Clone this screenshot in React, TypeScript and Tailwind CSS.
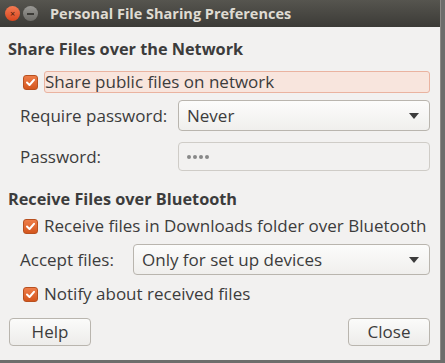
import { ReactNode } from 'react'

const font = { fontFamily: '"Open Sans", "DejaVu Sans", sans-serif' }

const Check = () => (
  <span className="flex h-[15px] w-[15px] shrink-0 items-center justify-center rounded-[3px] border border-[#b8501f] bg-gradient-to-b from-[#ee7d48] to-[#d4561c]">
    <svg width="11" height="11" viewBox="0 0 11 11">
      <path d="M2 5.5 L4.5 8 L9 2.8" fill="none" stroke="#fff" strokeWidth="2" strokeLinecap="round" strokeLinejoin="round" />
    </svg>
  </span>
)

const Arrow = () => (
  <svg width="10" height="6" viewBox="0 0 10 6" className="mr-[10px]">
    <path d="M0 0 H10 L5 6 Z" fill="#3c3c3c" />
  </svg>
)

const CheckRow = ({ children, highlight }: { children: ReactNode; highlight?: boolean }) => (
  <div className="flex h-[22px] items-center gap-[6px] whitespace-nowrap pl-[23px] pr-[10px]">
    <Check />
    <span
      className={
        highlight
          ? 'flex h-[22px] flex-1 items-center rounded-[3px] border border-[#eab3a0] bg-[#f8e5dd]'
          : ''
      }
    >
      {children}
    </span>
  </div>
)

const Combo = ({ value }: { value: string }) => (
  <div className="flex h-[31px] flex-1 items-center justify-between rounded-[4px] border border-[#b9b5ae] bg-gradient-to-b from-[#fcfcfb] to-[#f0efed] pl-[8px]">
    <span>{value}</span>
    <Arrow />
  </div>
)

export default function App() {
  return (
    <div className="h-[363px] w-[445px] bg-[#6d6d6b]" style={font}>
      <div className="flex h-[360px] w-[441px] flex-col border-r border-[#8c8a86] bg-[#f2f1f0] text-[17px] text-[#3c3c3c]">
        <div className="flex h-[27px] items-center bg-gradient-to-b from-[#56554f] to-[#3c3b37] pl-[5px]">
          <span className="flex h-[15px] w-[15px] items-center justify-center rounded-full bg-gradient-to-b from-[#f37a52] to-[#d9461c] text-[9px] leading-none text-[#4a1a0a]">
            ×
          </span>
          <span className="ml-[3px] flex h-[15px] w-[15px] items-center justify-center rounded-full bg-gradient-to-b from-[#9a9995] to-[#6d6c68]">
            <span className="h-[2px] w-[7px] bg-[#3c3b37]" />
          </span>
          <span className="ml-[12px] text-[14.5px] font-bold text-[#dfdbd2]">Personal File Sharing Preferences</span>
        </div>

        <div className="mt-[12px] pl-[8px] text-[16.3px] font-bold leading-[20px]">Share Files over the Network</div>
        <div className="mt-[12px]">
          <CheckRow highlight>Share public files on network</CheckRow>
        </div>
        <div className="mt-[7px] flex items-center pl-[20px] pr-[10px]">
          <span className="w-[158px]">Require password:</span>
          <Combo value="Never" />
        </div>
        <div className="mt-[11px] flex items-center pl-[20px] pr-[10px]">
          <span className="w-[158px]">Password:</span>
          <div className="flex h-[29px] flex-1 items-center gap-[2px] rounded-[4px] border border-[#cfccc7] bg-[#f2f1f0] pl-[8px]">
            <span className="h-[4px] w-[4px] rounded-full bg-[#888]" />
            <span className="h-[4px] w-[4px] rounded-full bg-[#888]" />
            <span className="h-[4px] w-[4px] rounded-full bg-[#888]" />
            <span className="h-[4px] w-[4px] rounded-full bg-[#888]" />
          </div>
        </div>

        <div className="mt-[18px] pl-[8px] text-[16.3px] font-bold leading-[20px]">Receive Files over Bluetooth</div>
        <div className="mt-[6px]">
          <CheckRow>Receive files in Downloads folder over Bluetooth</CheckRow>
        </div>
        <div className="mt-[7px] flex items-center pl-[20px] pr-[10px]">
          <span className="w-[113px]">Accept files:</span>
          <Combo value="Only for set up devices" />
        </div>
        <div className="mt-[8px]">
          <CheckRow>Notify about received files</CheckRow>
        </div>

        <div className="mt-[13px] flex justify-between pl-[9px] pr-[10px]">
          <button className="h-[28px] w-[82px] rounded-[4px] border border-[#b9b5ae] bg-gradient-to-b from-[#fbfbfa] to-[#edecea]">Help</button>
          <button className="h-[28px] w-[82px] rounded-[4px] border border-[#b9b5ae] bg-gradient-to-b from-[#fbfbfa] to-[#edecea]">Close</button>
        </div>
      </div>
    </div>
  )
}
